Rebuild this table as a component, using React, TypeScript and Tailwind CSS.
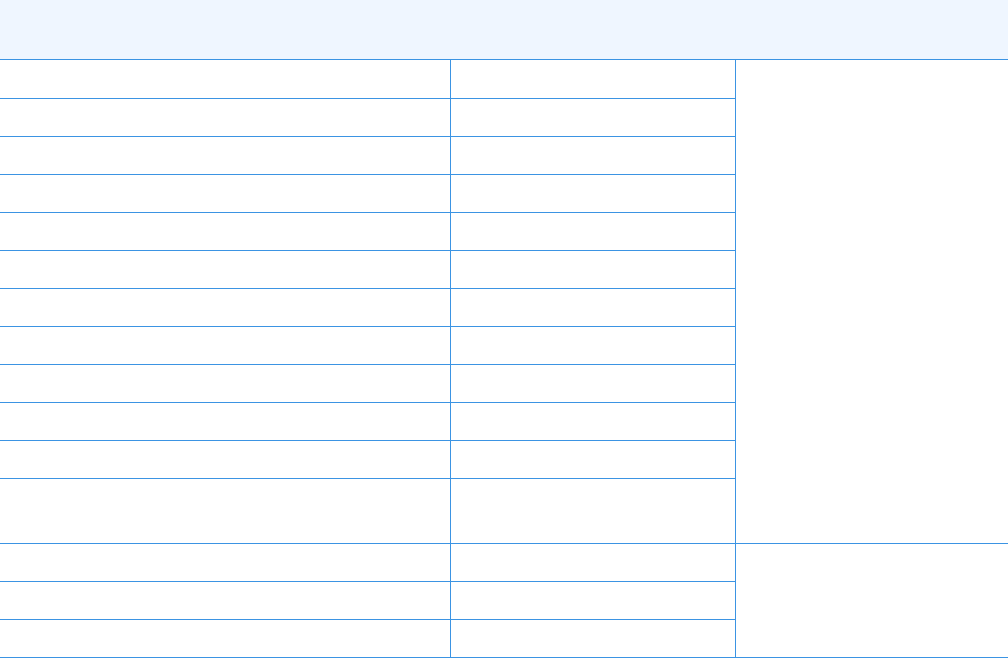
export default function App() {
  const topRows = Array.from({ length: 12 }, (_, i) => i);
  const bottomRows = Array.from({ length: 3 }, (_, i) => i);

  return (
    <div className="w-full bg-white font-['Liberation_Sans',Arial,sans-serif] text-sm text-gray-800">
      <table className="w-full table-fixed border-collapse">
        <colgroup>
          <col className="w-[450px]" />
          <col className="w-[285px]" />
          <col />
        </colgroup>
        <thead>
          <tr className="h-[59px] bg-[#eff6ff]">
            <th className="border-b border-[#3b94e3] p-0" />
            <th className="border-b border-[#3b94e3] p-0" />
            <th className="border-b border-[#3b94e3] p-0" />
          </tr>
        </thead>
        <tbody>
          {topRows.map((i) => (
            <tr key={`t${i}`} className={i === 0 ? 'h-[39px]' : i === 11 ? 'h-[65px]' : 'h-[38px]'}>
              <td className="border-b border-r border-[#3b94e3] p-0" />
              <td className="border-b border-r border-[#3b94e3] p-0" />
              {i === 0 && <td rowSpan={12} className="border-b border-[#3b94e3] p-0" />}
            </tr>
          ))}
          {bottomRows.map((i) => (
            <tr key={`b${i}`} className="h-[38px]">
              <td className="border-b border-r border-[#3b94e3] p-0" />
              <td className="border-b border-r border-[#3b94e3] p-0" />
              {i === 0 && <td rowSpan={3} className="border-b border-[#3b94e3] p-0" />}
            </tr>
          ))}
        </tbody>
      </table>
    </div>
  );
}
